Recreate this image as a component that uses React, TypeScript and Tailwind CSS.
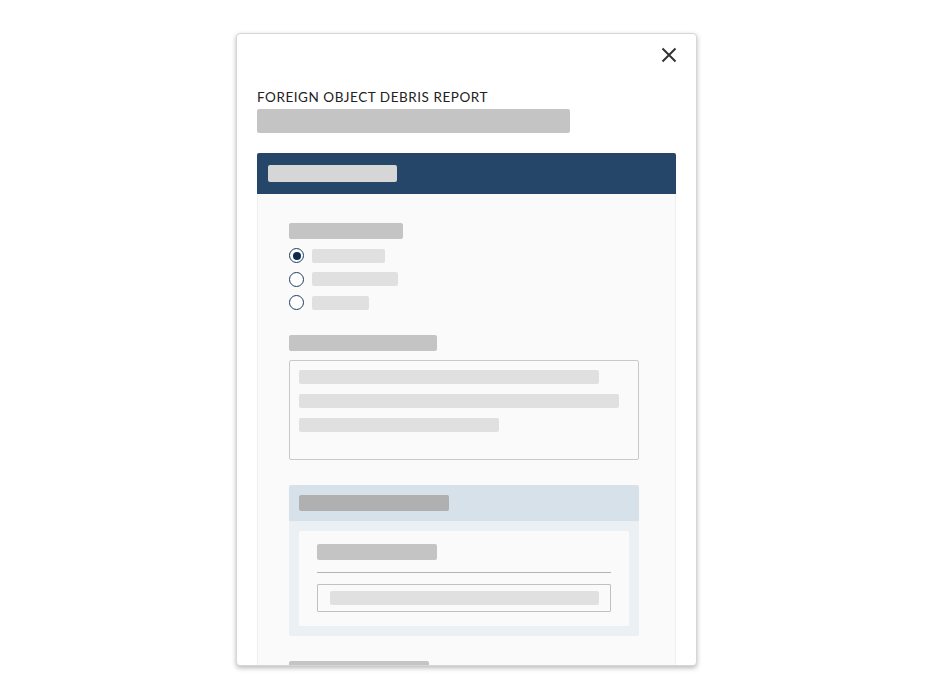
export default function App() {
  const radios = [
    { w: 'w-[73px]', on: true },
    { w: 'w-[86px]', on: false },
    { w: 'w-[57px]', on: false },
  ]

  return (
    <div className="w-full h-[700px] bg-white flex justify-center pt-[33px]">
      <div className="w-[461px] h-[633px] flex flex-col px-[20px] bg-white border border-[#d6d6d6] rounded-[4px] overflow-hidden shadow-[0_2px_5px_rgba(0,0,0,0.28)]">
        {/* close */}
        <div className="shrink-0 flex justify-end pt-[13px] mr-[-1px]">
          <svg width="16" height="16" viewBox="0 0 16 16" className="text-[#333333]">
            <path d="M1.5 1.5 L14.5 14.5 M14.5 1.5 L1.5 14.5" stroke="currentColor" strokeWidth="2" fill="none" />
          </svg>
        </div>

        <h1 className="shrink-0 mt-[26px] text-[13.5px] leading-[16px] tracking-[0.04em] text-[#222222] font-['Lato',sans-serif]">
          FOREIGN OBJECT DEBRIS REPORT
        </h1>
        <div className="shrink-0 mt-[4px] w-[313px] h-[24px] bg-[#c4c4c4] rounded-[2px]" />

        {/* section header */}
        <div className="shrink-0 mt-[20px] h-[41px] bg-[#254669] rounded-t-[2px] flex items-center pl-[11px]">
          <div className="w-[129px] h-[17px] bg-[#d6d6d6] rounded-[2px]" />
        </div>

        {/* section body */}
        <div className="shrink-0 h-[600px] bg-[#fafafa] border-x border-[#efefef] pl-[31px] pt-[29px] flex flex-col">
          <div className="shrink-0 w-[114px] h-[16px] bg-[#c4c4c4] rounded-[2px]" />

          <div className="shrink-0 mt-[9px] flex flex-col gap-[8.5px]">
            {radios.map((r, i) => (
              <div key={i} className="flex items-center gap-[8px] h-[15px]">
                <div className="w-[15px] h-[15px] rounded-full border-[1.5px] border-[#1e3d5f] flex items-center justify-center bg-white">
                  {r.on && <div className="w-[8px] h-[8px] rounded-full bg-[#0d2b4e]" />}
                </div>
                <div className={`${r.w} h-[14px] bg-[#e0e0e0] rounded-[2px]`} />
              </div>
            ))}
          </div>

          <div className="shrink-0 mt-[25px] w-[148px] h-[16px] bg-[#c4c4c4] rounded-[2px]" />
          <div className="shrink-0 mt-[9px] w-[350px] h-[100px] border border-[#c8c8c8] rounded-[2px] pt-[9px] pl-[9px] flex flex-col gap-[10px]">
            <div className="w-[300px] h-[14px] bg-[#e0e0e0] rounded-[2px]" />
            <div className="w-[320px] h-[14px] bg-[#e0e0e0] rounded-[2px]" />
            <div className="w-[200px] h-[14px] bg-[#e0e0e0] rounded-[2px]" />
          </div>

          {/* nested group */}
          <div className="shrink-0 mt-[25px] w-[350px] rounded-[2px] overflow-hidden bg-[#ebf0f5]">
            <div className="h-[36px] bg-[#d7e1ea] flex items-center pl-[10px]">
              <div className="w-[150px] h-[16px] bg-[#b0b0b0] rounded-[2px]" />
            </div>
            <div className="p-[10px]">
              <div className="h-[95px] bg-[#fafafa] pl-[18px] pt-[13px] flex flex-col">
                <div className="shrink-0 w-[120px] h-[16px] bg-[#c4c4c4] rounded-[2px]" />
                <div className="shrink-0 mt-[12px] w-[294px] h-px bg-[#b4b4b4]" />
                <div className="shrink-0 mt-[11px] w-[294px] h-[28px] border border-[#c0c0c0] rounded-[1px] pl-[12px] flex items-center">
                  <div className="w-[269px] h-[14px] bg-[#e0e0e0] rounded-[2px]" />
                </div>
              </div>
            </div>
          </div>

          <div className="shrink-0 mt-[25px] w-[140px] h-[16px] bg-[#c4c4c4] rounded-[2px]" />
        </div>
      </div>
    </div>
  )
}
